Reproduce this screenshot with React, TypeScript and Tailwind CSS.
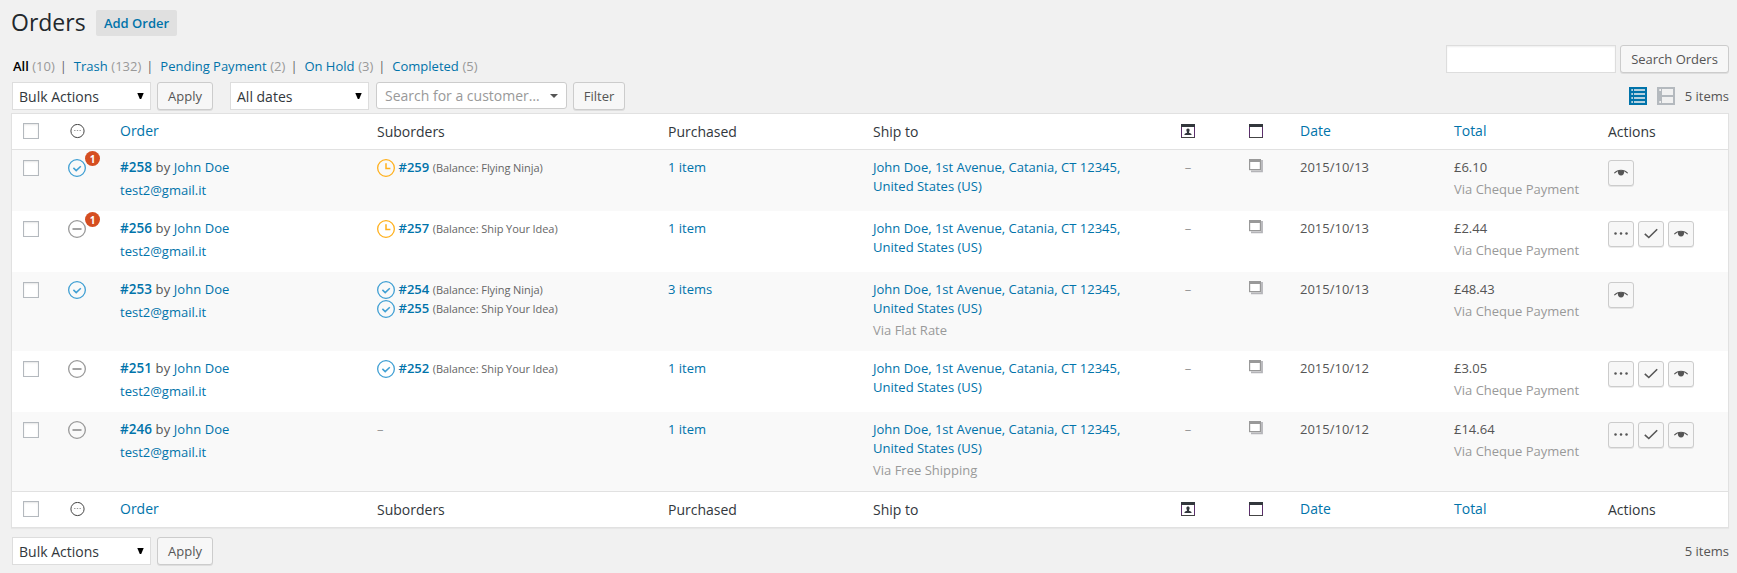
import React from "react";

type Status = "completed" | "on-hold" | "pending";

interface Suborder {
  id: string;
  status: Status;
  vendor: string;
}

interface Order {
  id: string;
  status: Status;
  badge?: number;
  suborders: Suborder[];
  purchased: string;
  shipping?: string;
  date: string;
  total: string;
  open: boolean;
}

const orders: Order[] = [
  { id: "#258", status: "completed", badge: 1, suborders: [{ id: "#259", status: "pending", vendor: "Flying Ninja" }], purchased: "1 item", date: "2015/10/13", total: "£6.10", open: false },
  { id: "#256", status: "on-hold", badge: 1, suborders: [{ id: "#257", status: "pending", vendor: "Ship Your Idea" }], purchased: "1 item", date: "2015/10/13", total: "£2.44", open: true },
  {
    id: "#253",
    status: "completed",
    suborders: [
      { id: "#254", status: "completed", vendor: "Flying Ninja" },
      { id: "#255", status: "completed", vendor: "Ship Your Idea" },
    ],
    purchased: "3 items",
    shipping: "Via Flat Rate",
    date: "2015/10/13",
    total: "£48.43",
    open: false,
  },
  { id: "#251", status: "on-hold", suborders: [{ id: "#252", status: "completed", vendor: "Ship Your Idea" }], purchased: "1 item", date: "2015/10/12", total: "£3.05", open: true },
  { id: "#246", status: "on-hold", suborders: [], purchased: "1 item", shipping: "Via Free Shipping", date: "2015/10/12", total: "£14.64", open: true },
];

const columns = "grid grid-cols-[44px_64px_257px_291px_205px_281px_68px_78px_154px_154px_1fr]";

function StatusIcon({ status }: { status: Status }) {
  const tone = status === "completed" ? "text-[#3f9fd3]" : status === "pending" ? "text-[#ffb01c]" : "text-[#999]";
  return (
    <svg className={`block size-[18px] shrink-0 ${tone}`} viewBox="0 0 18 18" fill="none" stroke="currentColor" strokeWidth="1.3">
      <circle cx="9" cy="9" r="8.35" />
      {status === "completed" && <path d="M5.4 8.9 8.2 11.6 12.8 7.2" strokeWidth="1.5" />}
      {status === "on-hold" && <path d="M4.5 9H13.5" strokeWidth="1.8" />}
      {status === "pending" && <path d="M9 4.2V9.5H13.4" strokeWidth="1.5" />}
    </svg>
  );
}

function HeaderStatusIcon() {
  return (
    <svg className="block size-[15px]" viewBox="0 0 15 15" fill="none">
      <circle cx="7.5" cy="7" r="6.6" stroke="#444" strokeWidth="1" />
      <path d="M4.100 6.500h1.400M6.800 6.500h1.400M9.500 6.500h1.400" stroke="#999" strokeWidth="1" />
    </svg>
  );
}

function WindowIcon({ person = false }: { person?: boolean }) {
  return (
    <svg className="block size-[14px]" viewBox="0 0 14 14" fill="none">
      <rect x="0.5" y="0.5" width="13" height="13" stroke="#5b2f6b" />
      <path d="M0 13.500H14" stroke="#444" />
      <rect width="14" height="3" fill="#32373c" />
      {person && <path d="M7 4.500c1.200 0 1.700.8 1.600 1.900-.1.8-.4 1.200-.6 1.600v.8c1.200.3 2.600.7 2.600 2.200H3.400c0-1.500 1.400-1.900 2.600-2.200v-.8c-.2-.4-.5-.8-.6-1.600C5.300 5.300 5.800 4.500 7 4.500Z" fill="#32373c" />}
    </svg>
  );
}

function NotesIcon() {
  return (
    <svg className="block size-[14px]" viewBox="0 0 14 14" fill="none">
      <path d="M13 1V12.300H2" stroke="#b4b4b8" strokeWidth="1.800" />
      <rect x="0.600" y="0.600" width="10.800" height="10" fill="#fff" stroke="#999" strokeWidth="1.200" />
      <rect width="12" height="3" fill="#999" />
    </svg>
  );
}

function Checkbox() {
  return <span className="block size-4 border border-[#b4b9be] bg-white shadow-[inset_0_1px_2px_rgba(0,0,0,0.1)]" />;
}

function Button({ children, className }: { children: React.ReactNode; className: string }) {
  return (
    <button className={`flex h-7 items-center justify-center rounded-[3px] border border-[#ccc] bg-[#f7f7f7] pt-[2px] text-[13px] text-[#555] shadow-[0_1px_0_rgba(0,0,0,0.08)] ${className}`}>
      {children}
    </button>
  );
}

function Select({ label }: { label: string }) {
  return (
    <div className="flex h-7 w-[139px] items-center justify-between border border-[#ddd] bg-white pr-[6px] pl-[6px] text-[14px] text-[#32373c]">
      <span className="pt-px">{label}</span>
      <svg className="mb-[1px] block h-[6px] w-[7px]" viewBox="0 0 7 6">
        <path d="M.3 0H6.700L4.200 6H2.800Z" fill="#000" />
      </svg>
    </div>
  );
}

type Action = "processing" | "complete" | "view";

function ActionButton({ kind }: { kind: Action }) {
  return (
    <button className="flex size-[26px] items-start justify-center rounded-[3px] border border-[#ccc] bg-[#f7f7f7] pt-[4px] text-[#555] shadow-[0_1px_0_rgba(0,0,0,0.08)]">
      <svg className="block size-[14px]" viewBox="0 0 14 14" fill="none">
        {kind === "processing" && (
          <g fill="currentColor">
            <circle cx="1.500" cy="7.500" r="1.250" />
            <circle cx="7" cy="7.500" r="1.250" />
            <circle cx="12.500" cy="7.500" r="1.250" />
          </g>
        )}
        {kind === "complete" && <path d="M.8 7.800 4.800 11.500 13.200 3.300" stroke="currentColor" strokeWidth="1.600" />}
        {kind === "view" && (
          <>
            <path d="M.3 8.200C2 6.200 4.300 5.200 7 5.200s5 1 6.700 3" stroke="currentColor" strokeWidth="1.100" />
            <path d="M3.900 6.200C4.600 5.100 9.400 5.100 10.100 6.200 10.400 8.600 9.200 10.400 7 10.400S3.600 8.600 3.900 6.200Z" fill="currentColor" />
          </>
        )}
      </svg>
    </button>
  );
}

function HeaderRow() {
  return (
    <div className={`${columns} h-[35px] bg-white text-[14px] leading-5 text-[#32373c]`}>
      <div className="pt-[9px] pl-[11px]"><Checkbox /></div>
      <div className="pt-[10px] pl-[14px]"><HeaderStatusIcon /></div>
      <div className="pt-[7px] text-[#0073aa]">Order</div>
      <div className="pt-[8px]">Suborders</div>
      <div className="pt-[8px]">Purchased</div>
      <div className="pt-[8px]">Ship to</div>
      <div className="pt-[10px] pl-[27px]"><WindowIcon person /></div>
      <div className="pt-[10px] pl-[27px]"><WindowIcon /></div>
      <div className="pt-[7px] text-[#0073aa]">Date</div>
      <div className="pt-[7px] text-[#0073aa]">Total</div>
      <div className="pt-[8px]">Actions</div>
    </div>
  );
}

function OrderRow({ order, index }: { order: Order; index: number }) {
  const height = order.shipping ? "h-[79px]" : "h-[61px]";
  const stripe = index % 2 === 0 ? "bg-[#f9f9f9]" : "bg-white";
  const actions: Action[] = order.open ? ["processing", "complete", "view"] : ["view"];
  return (
    <div className={`${columns} ${height} ${stripe} pt-2 text-[13px] leading-[19px] text-[#555]`}>
      <div className="pt-[2px] pl-[11px]"><Checkbox /></div>
      <div className="pt-px pl-[12px]">
        <div className="relative size-[18px]">
          <StatusIcon status={order.status} />
          {order.badge && (
            <span className="absolute -top-2 left-[17px] flex size-[15px] items-center justify-center rounded-full bg-[#d54e21] text-[10px] leading-none font-bold text-white">
              {order.badge}
            </span>
          )}
        </div>
      </div>
      <div>
        <div className="tracking-[0.07px]"><span className="text-[13.5px] font-semibold text-[#0073aa]">{order.id}</span> by <span className="text-[#0073aa]">John Doe</span></div>
        <div className="mt-[4px] text-[#0073aa]">test2@gmail.it</div>
      </div>
      <div>
        {order.suborders.length === 0 && <span className="text-[#999]">–</span>}
        {order.suborders.map((sub) => (
          <div key={sub.id} className="flex h-[19px] items-center">
            <StatusIcon status={sub.status} />
            <span className="ml-[3.5px] font-semibold text-[#0073aa]">{sub.id}</span>
            <span className="ml-[3.5px] text-[11px] tracking-[-0.07px] text-[#666]">(Balance: {sub.vendor})</span>
          </div>
        ))}
      </div>
      <div className="text-[#0073aa]">{order.purchased}</div>
      <div>
        <div className="text-[#0073aa]">John Doe, 1st Avenue, Catania, CT 12345,<br />United States (US)</div>
        {order.shipping && <div className="mt-[3px] text-[#999]">{order.shipping}</div>}
      </div>
      <div className="text-center text-[#999]">–</div>
      <div className="pt-px pl-[27px]"><NotesIcon /></div>
      <div>{order.date}</div>
      <div>
        <div>{order.total}</div>
        <div className="mt-[3px] text-[#999]">Via Cheque Payment</div>
      </div>
      <div className="flex gap-1 pt-[2px]">
        {actions.map((kind) => <ActionButton key={kind} kind={kind} />)}
      </div>
    </div>
  );
}

const views = [
  { label: "Trash", count: 132 },
  { label: "Pending Payment", count: 2 },
  { label: "On Hold", count: 3 },
  { label: "Completed", count: 5 },
];

export default function App() {
  return (
    <div className="h-[573px] w-[1737px] overflow-hidden bg-[#f1f1f1] pr-2 pl-[11px] font-['Open_Sans',sans-serif] text-[13px] text-[#555]">
      <header className="flex h-[45px] items-start">
        <h1 className="mt-2 w-[85px] text-[23px] leading-[29px] text-[#23282d]">Orders</h1>
        <button className="mt-[10px] h-[26px] w-[81px] rounded-[2px] bg-[#e0e0e0] pt-[2px] text-[13px] font-semibold text-[#0073aa]">Add Order</button>
      </header>

      <div className="flex h-[37px] justify-between">
        <ul className="flex pt-3 pl-[2px] leading-[19px]">
          <li><span className="font-semibold text-black">All</span> <span className="text-[#999]">(10)</span></li>
          {views.map((view) => (
            <li key={view.label} className="flex">
              <span className="w-[19px] pl-[5px] text-[#666]">|</span>
              <span className="text-[#0073aa]">{view.label}</span>
              <span className="ml-[3.7px] text-[#999]">({view.count})</span>
            </li>
          ))}
        </ul>
        <div className="flex gap-1">
          <input className="h-7 w-[170px] border border-[#ddd] bg-white shadow-[inset_0_1px_2px_rgba(0,0,0,0.07)]" />
          <Button className="w-[109px]">Search Orders</Button>
        </div>
      </div>

      <div className="flex h-[31px] items-start pl-px">
        <Select label="Bulk Actions" />
        <Button className="ml-[6px] w-[56px]">Apply</Button>
        <div className="ml-[17px]"><Select label="All dates" /></div>
        <div className="ml-[7px] flex h-[27px] w-[191px] items-center justify-between rounded-[3px] border border-[#ccc] bg-white pr-2 pl-2 text-[14px] text-[#999]">
          Search for a customer…
          <svg className="block h-1 w-2" viewBox="0 0 8 4"><path d="M0 0H8L4 4Z" fill="#555" /></svg>
        </div>
        <Button className="ml-[6px] w-[52px]">Filter</Button>
        <div className="mt-[5px] ml-auto flex items-start">
          <svg className="block size-[18px]" viewBox="0 0 18 18">
            <path d="M0 0H18V18H0Z" fill="#0073aa" />
            <path d="M2.300 3H4M5 3H16M2.300 7H4M5 7H16M2.300 11H4M5 11H16M2.300 15H4M5 15H16" stroke="#f1f1f1" strokeWidth="1.700" />
          </svg>
          <svg className="ml-[10px] block size-[18px]" viewBox="0 0 18 18">
            <path d="M0 0H18V18H0Z" fill="#b4b9be" />
            <path d="M2.300 2H4V4H2.300ZM5 2H16V8H5ZM5 10H16V16H5ZM2.300 14H4V16H2.300Z" fill="#f1f1f1" />
          </svg>
          <span className="w-[54px] text-right leading-[19px]">5 items</span>
        </div>
      </div>

      <main className="border border-[#e1e1e1] shadow-[0_1px_1px_rgba(0,0,0,0.04)]">
        <HeaderRow />
        <div className="border-y border-[#e1e1e1]">
          {orders.map((order, index) => <OrderRow key={order.id} order={order} index={index} />)}
        </div>
        <HeaderRow />
      </main>

      <div className="flex items-start pt-[9px] pl-px">
        <Select label="Bulk Actions" />
        <Button className="ml-[6px] w-[56px]">Apply</Button>
        <span className="mt-[5px] ml-auto leading-[19px]">5 items</span>
      </div>
    </div>
  );
}
